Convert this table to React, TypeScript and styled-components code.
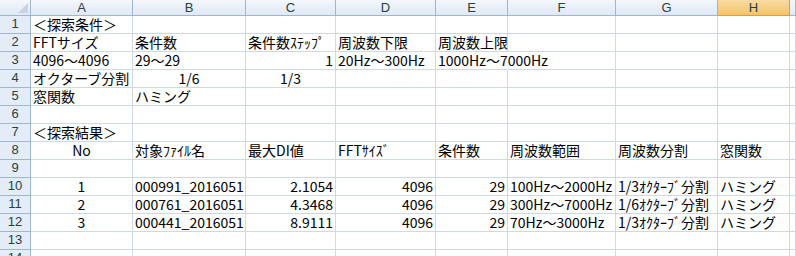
import React from 'react';
import styled, { createGlobalStyle, css } from 'styled-components';

const GlobalStyle = createGlobalStyle`
  html, body {
    margin: 0;
    padding: 0;
    background: #ffffff;
  }
`;

type Align = 'l' | 'r' | 'c';

interface CellData {
  v: string;
  align?: Align;
  spill?: boolean;
}

const COLUMNS = ['A', 'B', 'C', 'D', 'E', 'F', 'G', 'H', ''];
const SELECTED_COLUMN = 'H';
const GRID_COLUMNS = '31px 102px 113px 90px 100px 72px 108px 102px 72px 1fr';
const ROW_COUNT = 14;

const cell = (v: string, align: Align = 'l', extra: Partial<CellData> = {}): CellData => ({
  v,
  align,
  ...extra,
});

// sheet contents, keyed by row number, one entry per column A..
const sheet: Record<number, (CellData | null)[]> = {
  1: [cell('＜探索条件＞')],
  2: [cell('FFTサイズ'), cell('条件数'), cell('条件数ｽﾃｯﾌﾟ'), cell('周波数下限'), cell('周波数上限')],
  3: [
    cell('4096～4096'),
    cell('29～29'),
    cell('1', 'r'),
    cell('20Hz～300Hz'),
    cell('1000Hz～7000Hz', 'l', { spill: true }),
  ],
  4: [cell('オクターブ分割'), cell('1/6', 'c'), cell('1/3', 'c')],
  5: [cell('窓関数'), cell('ハミング')],
  7: [cell('＜探索結果＞')],
  8: [
    cell('No', 'c'),
    cell('対象ﾌｧｲﾙ名'),
    cell('最大DI値'),
    cell('FFTｻｲｽﾞ'),
    cell('条件数'),
    cell('周波数範囲'),
    cell('周波数分割'),
    cell('窓関数'),
  ],
  10: [
    cell('1', 'c'),
    cell('000991_2016051'),
    cell('2.1054', 'r'),
    cell('4096', 'r'),
    cell('29', 'r'),
    cell('100Hz～2000Hz'),
    cell('1/3ｵｸﾀｰﾌﾞ分割'),
    cell('ハミング'),
  ],
  11: [
    cell('2', 'c'),
    cell('000761_2016051'),
    cell('4.3468', 'r'),
    cell('4096', 'r'),
    cell('29', 'r'),
    cell('300Hz～7000Hz'),
    cell('1/6ｵｸﾀｰﾌﾞ分割'),
    cell('ハミング'),
  ],
  12: [
    cell('3', 'c'),
    cell('000441_2016051'),
    cell('8.9111', 'r'),
    cell('4096', 'r'),
    cell('29', 'r'),
    cell('70Hz～3000Hz'),
    cell('1/3ｵｸﾀｰﾌﾞ分割'),
    cell('ハミング'),
  ],
};

const Sheet = styled.div`
  width: 796px;
  height: 256px;
  overflow: hidden;
  background: #ffffff;
  display: grid;
  grid-template-columns: ${GRID_COLUMNS};
  grid-template-rows: 16px repeat(${ROW_COUNT}, 18px);
  font-family: 'Noto Sans CJK JP', 'Noto Sans', sans-serif;
`;

const headerFont = css`
  font-family: 'Liberation Sans', 'Noto Sans CJK JP', sans-serif;
  font-size: 13px;
  color: #27413e;
`;

const Corner = styled.div`
  position: relative;
  box-sizing: border-box;
  background: linear-gradient(#f4f7fc, #dfe8f5);
  border-right: 1px solid #9eb6ce;
  border-bottom: 1px solid #9eb6ce;

  &::after {
    content: '';
    position: absolute;
    right: 2px;
    bottom: 2px;
    border-style: solid;
    border-width: 0 0 10px 10px;
    border-color: transparent transparent #c9d4e2 transparent;
  }
`;

const ColumnHead = styled.div<{ $selected?: boolean }>`
  ${headerFont};
  box-sizing: border-box;
  display: flex;
  align-items: center;
  justify-content: center;
  line-height: 15px;
  border-right: 1px solid ${(p) => (p.$selected ? '#f29536' : '#9eb6ce')};
  border-bottom: 1px solid ${(p) => (p.$selected ? '#f29536' : '#9eb6ce')};
  background: ${(p) =>
    p.$selected ? 'linear-gradient(#f9dba3, #f2c468)' : 'linear-gradient(#f4f7fc, #dfe8f5)'};
`;

const RowHead = styled.div`
  ${headerFont};
  box-sizing: border-box;
  display: flex;
  align-items: flex-end;
  justify-content: center;
  padding-bottom: 1px;
  line-height: 16px;
  background: #e4ecf7;
  border-right: 1px solid #9eb6ce;
  border-bottom: 1px solid #9eb6ce;
`;

const justify: Record<Align, string> = { l: 'flex-start', r: 'flex-end', c: 'center' };

const Cell = styled.div<{ $align: Align; $spill?: boolean }>`
  box-sizing: border-box;
  display: flex;
  align-items: flex-end;
  justify-content: ${(p) => justify[p.$align]};
  padding: 0 2px;
  white-space: nowrap;
  font-size: 14px;
  line-height: 17px;
  color: #000000;
  border-right: 1px solid ${(p) => (p.$spill ? 'transparent' : '#d0d7e5')};
  border-bottom: 1px solid #d0d7e5;
`;

export default function App() {
  const rows = Array.from({ length: ROW_COUNT }, (_, i) => i + 1);
  return (
    <>
      <GlobalStyle />
      <Sheet>
        <Corner />
        {COLUMNS.map((name, i) => (
          <ColumnHead key={i} $selected={name === SELECTED_COLUMN}>
            {name}
          </ColumnHead>
        ))}
        {rows.map((r) => (
          <React.Fragment key={r}>
            <RowHead>{r}</RowHead>
            {COLUMNS.map((_, c) => {
              const data = sheet[r]?.[c];
              return (
                <Cell key={c} $align={data?.align ?? 'l'} $spill={data?.spill}>
                  {data?.v}
                </Cell>
              );
            })}
          </React.Fragment>
        ))}
      </Sheet>
    </>
  );
}
